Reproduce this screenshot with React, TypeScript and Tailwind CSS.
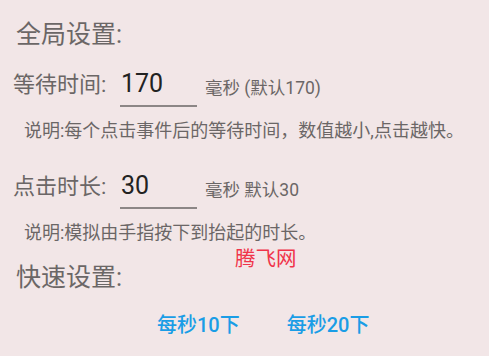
const FONT = "font-['Roboto','Noto_Sans_CJK_SC',sans-serif]";

function NumberRow({ label, value, unit }: { label: string; value: string; unit: string }) {
  return (
    <div className="flex h-[44px] items-center pl-[13px]">
      <span className="w-[107px] text-[22px] leading-[24px] text-[#6b6666]">{label}</span>
      <div className="flex h-[44px] w-[77px] items-center border-b-2 border-[#8c8686] pl-[1px] text-[25px] leading-[28px] text-[#222]">
        {value}
      </div>
      <span className="ml-[8px] mt-[6px] text-[17.5px] leading-[20px] text-[#6b6666]">{unit}</span>
    </div>
  );
}

export default function App() {
  return (
    <div className={`relative h-[356px] w-[489px] overflow-hidden bg-[#f2e6e7] ${FONT}`}>
      <div className="pl-[16px] pt-[22px] text-[25px] leading-[25px] text-[#6b6666]">全局设置:</div>

      <div className="mt-[16px]">
        <NumberRow label="等待时间:" value="170" unit="毫秒 (默认170)" />
      </div>
      <p className="mt-[12px] pl-[24px] text-[18px] leading-[24px] text-[#6b6666]">
        说明:每个点击事件后的等待时间，数值越小,点击越快。
      </p>

      <div className="mt-[22px]">
        <NumberRow label="点击时长:" value="30" unit="毫秒 默认30" />
      </div>
      <p className="mt-[12px] pl-[24px] text-[18px] leading-[24px] text-[#6b6666]">
        说明:模拟由手指按下到抬起的时长。
      </p>

      <div className="mt-[20px] pl-[16px] text-[25px] leading-[25px] text-[#6b6666]">快速设置:</div>

      <div className="mt-[23px] flex gap-[47px] pl-[157px] text-[20px] font-medium leading-[24px] text-[#1a9de6]">
        <button type="button">每秒10下</button>
        <button type="button">每秒20下</button>
      </div>

      <span className="absolute left-[235px] top-[249px] text-[20.5px] leading-[20px] text-[#f0344a]">腾飞网</span>
    </div>
  );
}
